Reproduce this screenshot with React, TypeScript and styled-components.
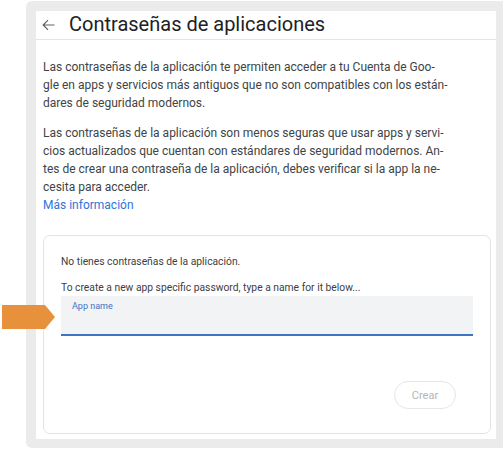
import styled, { createGlobalStyle } from 'styled-components';

const GlobalStyle = createGlobalStyle`
  html, body {
    margin: 0;
    padding: 0;
    background: #fff;
    font-family: Roboto, "Noto Sans", Arial, sans-serif;
  }
`;

const Page = styled.div`
  position: relative;
  width: 503px;
  height: 451px;
  padding: 1px 0 0 26px;
  box-sizing: border-box;
  overflow: hidden;
`;

const Frame = styled.div`
  width: 477px;
  height: 447px;
  box-sizing: border-box;
  background: #ebebeb;
  border-radius: 6px 0 0 6px;
  padding: 10px 7px 0 10px;
`;

const Panel = styled.div`
  background: #fff;
  width: 460px;
  height: 428px;
  display: flex;
  flex-direction: column;
`;

const Header = styled.div`
  height: 28px;
  border-bottom: 1px solid #e4e4e4;
  display: flex;
  align-items: center;
  gap: 14px;
  padding-left: 6px;
`;

const Title = styled.h1`
  margin: 0;
  font-size: 20px;
  font-weight: 400;
  color: #202124;
  line-height: 22px;
  margin-top: -3px;
`;

const Body = styled.div`
  padding: 18px 5px 0 7px;
  display: flex;
  flex-direction: column;
`;

const Paragraph = styled.p<{ $gap?: number }>`
  margin: 0 0 ${({ $gap }) => $gap ?? 0}px;
  font-size: 12px;
  line-height: 18px;
  color: #414447;
  white-space: nowrap;
`;

const MoreLink = styled.a`
  color: #2f74dc;
  text-decoration: none;
`;

const Card = styled.div`
  margin-top: 21px;
  width: 448px;
  height: 199px;
  box-sizing: border-box;
  border: 1px solid #e3e3e3;
  border-radius: 7px;
  padding: 19px 17px 0 17px;
  display: flex;
  flex-direction: column;
`;

const CardText = styled.div<{ $gap?: number }>`
  font-size: 10.3px;
  line-height: 14px;
  color: #3c4043;
  margin-bottom: ${({ $gap }) => $gap ?? 0}px;
  white-space: nowrap;
`;

const Field = styled.div`
  height: 40px;
  box-sizing: border-box;
  background: #f1f3f4;
  border-bottom: 2px solid #3f74c4;
  padding: 5px 0 0 11px;
`;

const FieldLabel = styled.div`
  font-size: 9px;
  line-height: 11px;
  color: #3f74c4;
`;

const Actions = styled.div`
  display: flex;
  justify-content: flex-end;
  padding-right: 17px;
  margin-top: 45px;
`;

const Button = styled.button`
  width: 62px;
  height: 28px;
  border-radius: 14px;
  border: 1px solid #e6e6e6;
  background: #fff;
  color: #b4b4b4;
  font-family: inherit;
  font-size: 11px;
  padding: 0;
`;

const Pointer = styled.div`
  position: absolute;
  left: 2px;
  top: 305px;
  width: 53px;
  height: 24px;
  background: #e8913d;
  clip-path: polygon(0 0, 43px 0, 53px 50%, 43px 100%, 0 100%);
`;

const BackArrow = () => (
  <svg width="13" height="12" viewBox="0 0 13 12" fill="none">
    <path d="M12.5 6H1.2M6 1.2L1.2 6L6 10.8" stroke="#5f6368" strokeWidth="1.2" />
  </svg>
);

export default function App() {
  return (
    <>
      <GlobalStyle />
      <Page>
        <Frame>
          <Panel>
            <Header>
              <BackArrow />
              <Title>Contraseñas de aplicaciones</Title>
            </Header>
            <Body>
              <Paragraph $gap={12}>
                Las contraseñas de la aplicación te permiten acceder a tu Cuenta de Goo-
                <br />
                gle en apps y servicios más antiguos que no son compatibles con los están-
                <br />
                dares de seguridad modernos.
              </Paragraph>
              <Paragraph>
                Las contraseñas de la aplicación son menos seguras que usar apps y servi-
                <br />
                cios actualizados que cuentan con estándares de seguridad modernos. An-
                <br />
                tes de crear una contraseña de la aplicación, debes verificar si la app la ne-
                <br />
                cesita para acceder.
                <br />
                <MoreLink href="#">Más información</MoreLink>
              </Paragraph>
              <Card>
                <CardText $gap={12}>No tienes contraseñas de la aplicación.</CardText>
                <CardText $gap={1}>To create a new app specific password, type a name for it below...</CardText>
                <Field>
                  <FieldLabel>App name</FieldLabel>
                </Field>
                <Actions>
                  <Button>Crear</Button>
                </Actions>
              </Card>
            </Body>
          </Panel>
        </Frame>
        <Pointer />
      </Page>
    </>
  );
}
